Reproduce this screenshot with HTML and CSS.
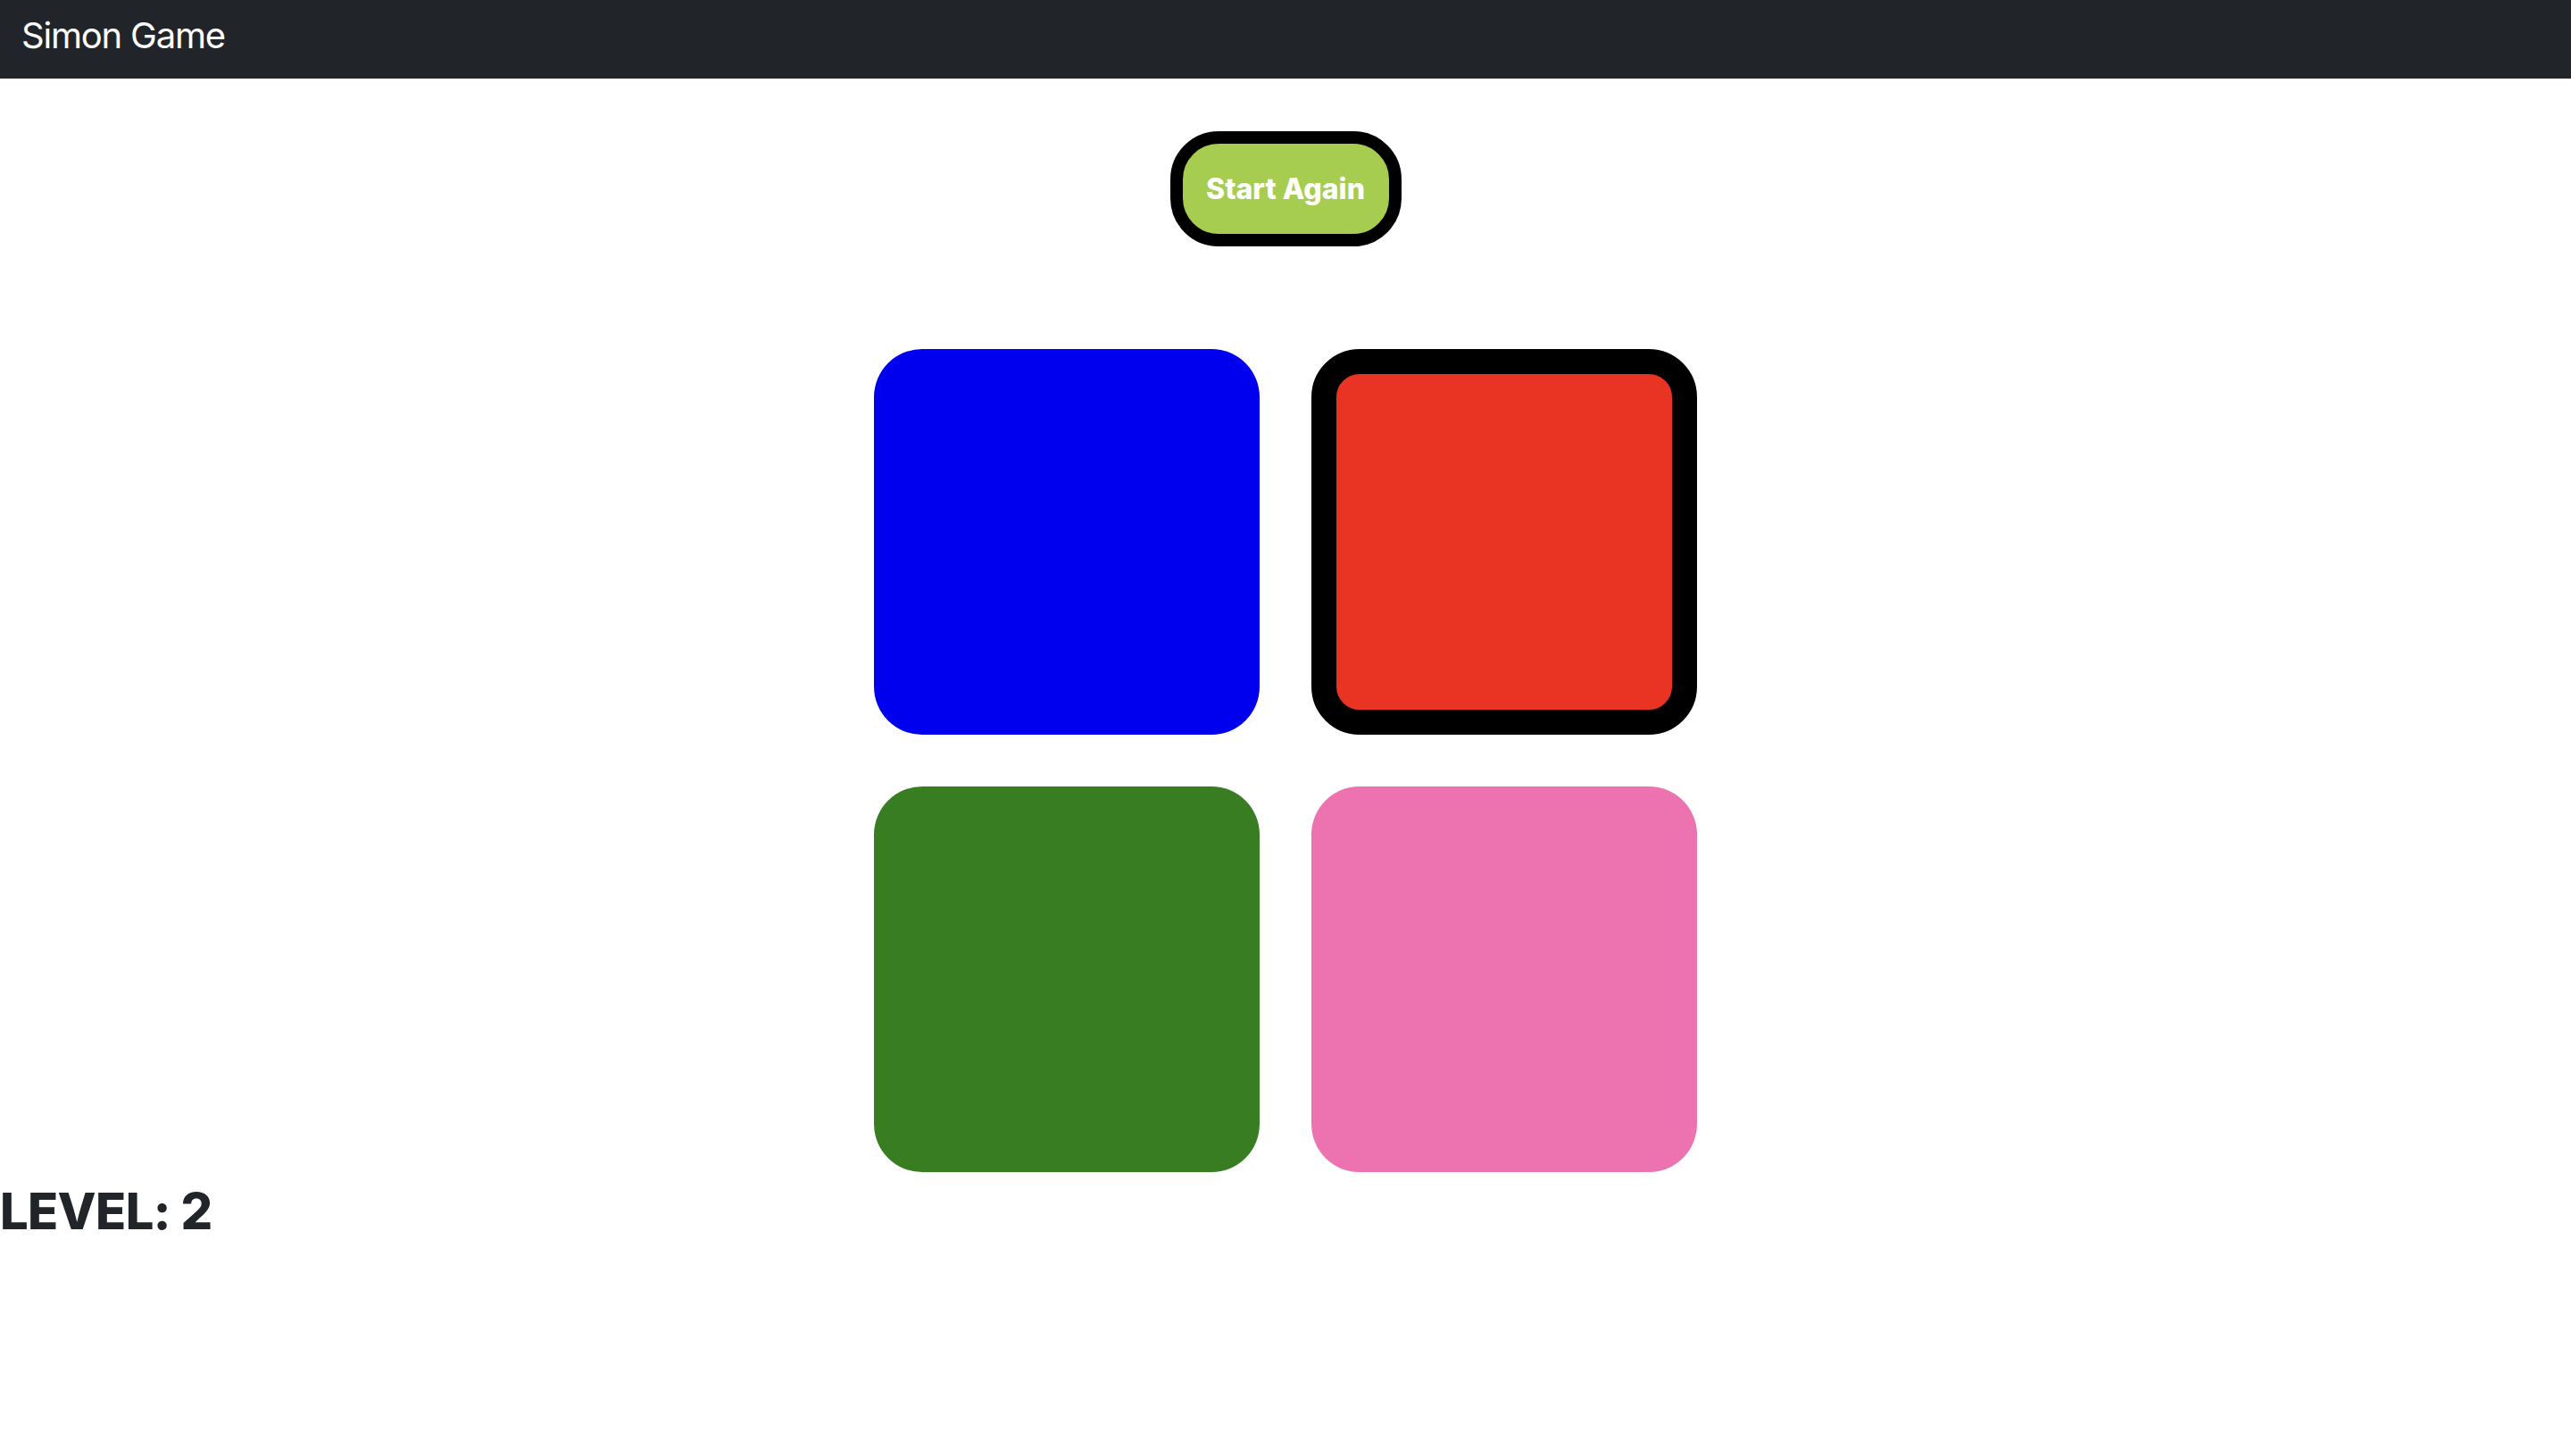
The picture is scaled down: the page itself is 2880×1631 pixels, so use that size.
FILE: index.html
```html
<!DOCTYPE html>
<html lang="en">
<head>
<meta charset="utf-8">
<title>Simon Game</title>
<link rel="stylesheet" href="styles.css">
</head>
<body>
<nav class="navbar">
  <span class="brand">Simon Game</span>
</nav>
<main class="game">
  <div class="controls">
    <button class="start-btn">Start Again</button>
  </div>
  <div class="board">
    <div class="pad pad-blue"></div>
    <div class="pad pad-red active"></div>
    <div class="pad pad-green"></div>
    <div class="pad pad-pink"></div>
  </div>
  <h3 class="level">LEVEL: 2</h3>
</main>
</body>
</html>
```
FILE: styles.css
```css
* { box-sizing: border-box; }
html, body { margin: 0; padding: 0; background: #fff; }
body {
  font-family: Inter, "Noto Sans", "Liberation Sans", sans-serif;
  color: #212529;
}
.navbar {
  height: 88px;
  background: #212529;
  padding: 0 24px;
  display: flex;
  align-items: flex-start;
}
.brand {
  color: #fff;
  font-size: 40px;
  line-height: 80px;
  font-weight: 400;
  letter-spacing: -1.2px;
}
.controls {
  display: flex;
  justify-content: center;
  padding-top: 59px;
}
.start-btn {
  height: 129px;
  min-width: 259px;
  padding: 0 26px;
  border: 14px solid #000;
  border-radius: 54px;
  background: #a6cc50;
  color: #fff;
  font-family: Inter, "Noto Sans", sans-serif;
  font-size: 32px;
  font-weight: 800;
  cursor: pointer;
}
.board {
  display: grid;
  grid-template-columns: 432px 432px;
  grid-auto-rows: 432px;
  gap: 58px;
  justify-content: center;
  margin-top: 115px;
}
.pad {
  border-radius: 54px;
}
.pad-blue { background: #0000ee; }
.pad-red { background: #e93323; }
.pad-green { background: #397d23; }
.pad-pink { background: #ec72b0; }
.pad.active { border: 28px solid #000; }
.level {
  margin: 11px 0 0;
  font-size: 56px;
  font-weight: 800;
  line-height: 1.2;
  letter-spacing: -0.6px;
}
```
